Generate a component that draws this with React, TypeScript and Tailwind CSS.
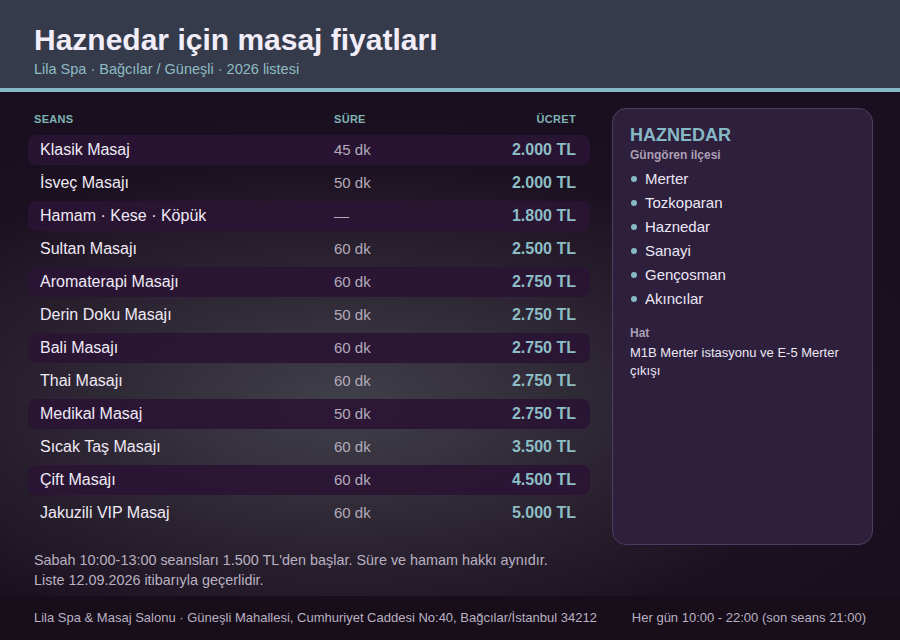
const rows = [
  { name: "Klasik Masaj", time: "45 dk", price: "2.000 TL" },
  { name: "İsveç Masajı", time: "50 dk", price: "2.000 TL" },
  { name: "Hamam · Kese · Köpük", time: "—", price: "1.800 TL" },
  { name: "Sultan Masajı", time: "60 dk", price: "2.500 TL" },
  { name: "Aromaterapi Masajı", time: "60 dk", price: "2.750 TL" },
  { name: "Derin Doku Masajı", time: "50 dk", price: "2.750 TL" },
  { name: "Bali Masajı", time: "60 dk", price: "2.750 TL" },
  { name: "Thai Masajı", time: "60 dk", price: "2.750 TL" },
  { name: "Medikal Masaj", time: "50 dk", price: "2.750 TL" },
  { name: "Sıcak Taş Masajı", time: "60 dk", price: "3.500 TL" },
  { name: "Çift Masajı", time: "60 dk", price: "4.500 TL" },
  { name: "Jakuzili VIP Masaj", time: "60 dk", price: "5.000 TL" },
];

const areas = ["Merter", "Tozkoparan", "Haznedar", "Sanayi", "Gençosman", "Akıncılar"];

export default function App() {
  return (
    <div className="flex h-[640px] w-[900px] flex-col overflow-hidden bg-[#1a0f1e] font-['Liberation_Sans',Arial,sans-serif]">
      <header className="h-[92px] shrink-0 border-b-4 border-[#88b8c8] bg-[#353b4b] px-[34px] pt-[21px]">
        <h1 className="text-[30px] leading-[37px] font-bold text-[#f1edf9]">Haznedar için masaj fiyatları</h1>
        <p className="mt-[2px] text-[14.5px] leading-[18px] text-[#8fbcc4]">Lila Spa · Bağcılar / Güneşli · 2026 listesi</p>
      </header>

      <div className="flex flex-1 flex-col bg-[radial-gradient(ellipse_70%_60%_at_38%_62%,#40404a_0%,#2c2432_45%,#1c1120_80%,#1a0f1e_100%)]">
        <main className="flex flex-1 gap-[22px] pl-[28px] pr-[27px] pt-[16px] pb-[5px]">
          <section className="w-[562px]">
            <div className="flex h-[21px] items-center px-[6px] pt-[1px] text-[11px] font-bold tracking-[0.3px] text-[#7fb3b5]">
              <span className="w-[300px]">SEANS</span>
              <span className="w-[100px]">SÜRE</span>
              <span className="flex-1 text-right pr-[8px]">ÜCRET</span>
            </div>
            <div className="mt-[6px] flex flex-col gap-[3px]">
              {rows.map((r, i) => (
                <div
                  key={r.name}
                  className={
                    "flex h-[30px] items-center rounded-[8px] pl-[12px] pr-[14px] " +
                    (i % 2 === 0 ? "bg-[rgba(42,20,52,0.9)]" : "")
                  }
                >
                  <span className="w-[294px] text-[16px] text-[#efeaf5]">{r.name}</span>
                  <span className="w-[100px] text-[15px] text-[#b3abbb]">{r.time}</span>
                  <span className="flex-1 text-right text-[16px] font-bold text-[#8dbdc5]">{r.price}</span>
                </div>
              ))}
            </div>
          </section>

          <aside className="flex-1 rounded-[14px] border border-[#4d3d5f] bg-[#2e1f3d] px-[17px] pt-[15px]">
            <h2 className="text-[18px] leading-[22px] font-bold text-[#86b9c5]">HAZNEDAR</h2>
            <p className="mt-[1px] text-[12px] font-bold leading-[16px] text-[#aa9fb3]">Güngören ilçesi</p>
            <ul className="mt-[4px] flex flex-col">
              {areas.map((a) => (
                <li key={a} className="flex h-[24px] items-center text-[15px] text-[#ece7f3]">
                  <span className="ml-[1px] mr-[8px] h-[6px] w-[6px] rounded-full bg-[#86b9c5]" />
                  {a}
                </li>
              ))}
            </ul>
            <p className="mt-[14px] text-[12px] font-bold leading-[16px] text-[#aa9fb3]">Hat</p>
            <p className="mt-[3px] text-[13px] leading-[18px] text-[#ece7f3]">M1B Merter istasyonu ve E-5 Merter çıkışı</p>
          </aside>
        </main>

        <div className="h-[46px] px-[34px] text-[14.4px] leading-[20px] text-[#b9b1c2]">
          <p>Sabah 10:00-13:00 seansları 1.500 TL'den başlar. Süre ve hamam hakkı aynıdır.</p>
          <p>Liste 12.09.2026 itibarıyla geçerlidir.</p>
        </div>
      </div>

      <footer className="flex h-[44px] shrink-0 items-center justify-between bg-[#170e1a] pl-[34px] pr-[34px] text-[13px] text-[#b9b1c2]">
        <span>Lila Spa &amp; Masaj Salonu · Güneşli Mahallesi, Cumhuriyet Caddesi No:40, Bağcılar/İstanbul 34212</span>
        <span>Her gün 10:00 - 22:00 (son seans 21:00)</span>
      </footer>
    </div>
  );
}
